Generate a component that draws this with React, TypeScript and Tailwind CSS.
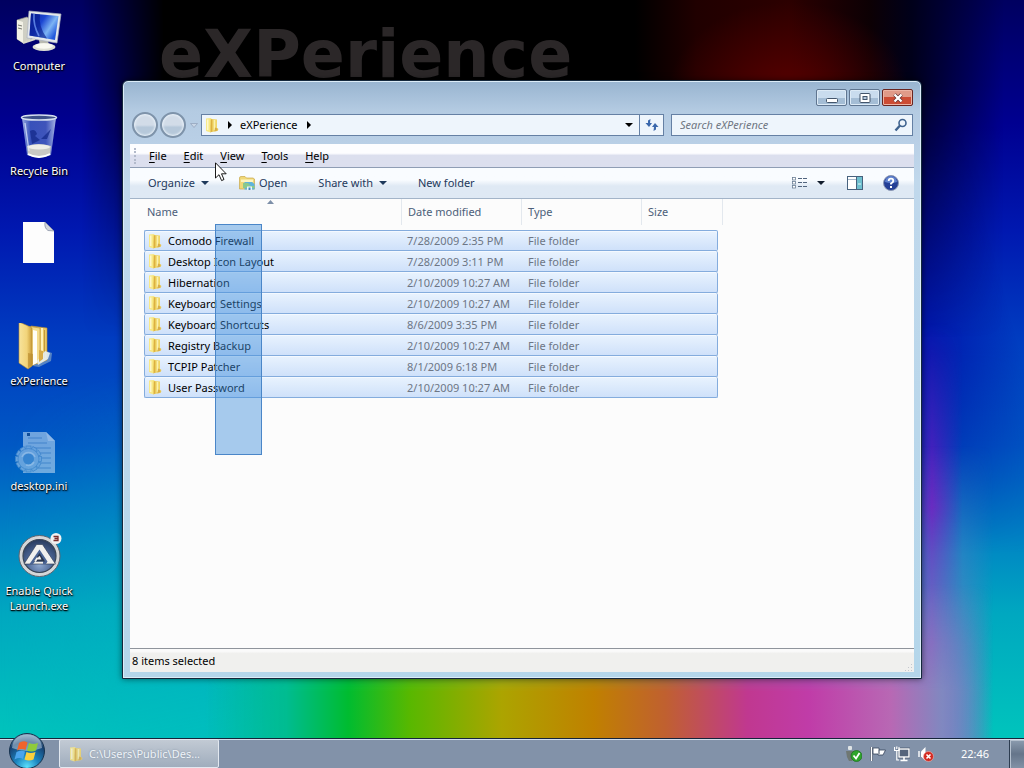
import type { ReactNode } from "react";

function ComputerIcon() {
  return (
    <svg viewBox="0 0 48 48" className="size-12" aria-hidden="true">
      <defs>
        <linearGradient id="screen" x1="0" y1="0" x2="1" y2="0.6">
          <stop offset="0" stopColor="#0a1f9c" />
          <stop offset="0.45" stopColor="#1c46d2" />
          <stop offset="0.75" stopColor="#7db4f4" />
          <stop offset="1" stopColor="#2258dc" />
        </linearGradient>
      </defs>
      <g transform="translate(-2 0)">
        <path d="M4 12 L14 9 L18 12 L18 32 L10 35 L4 31 Z" fill="#cfcfc4" stroke="#8f9088" strokeWidth="0.7" />
        <path d="M4 12 L10 14 L10 35 L4 31 Z" fill="#f2f1e6" />
        <path d="M5 17l4 1M5 20l4 1" stroke="#77786e" strokeWidth="1" />
        <path d="M26 32 L35 32 L36 38 L27 38 Z" fill="#b9bab0" />
        <ellipse cx="31" cy="39" rx="11.500" ry="4" fill="#dedfd4" />
        <ellipse cx="31" cy="38" rx="9" ry="2.800" fill="#f8f8f0" />
        <path d="M16 3 L48 6 L44 35 L14 30 Z" fill="#e4e8ec" stroke="#a9b0bc" strokeWidth="0.7" />
        <path d="M18 5.500 L45.500 8 L42 32 L16.500 27.500 Z" fill="url(#screen)" />
        <path d="M18 5.500 L27 6.400 Q25 18 34 30.500 L16.500 27.500 Z" fill="#061a8c" opacity="0.65" />
        <path d="M21 6 Q20 17 26 28" stroke="#6a94f0" strokeWidth="1.600" fill="none" opacity="0.8" />
        <path d="M10 35 L22 31" stroke="#d8d8cc" strokeWidth="2" />
      </g>
    </svg>
  );
}

function RecycleIcon() {
  return (
    <svg viewBox="0 0 48 48" className="size-12" aria-hidden="true">
      <defs>
        <linearGradient id="bin" x1="0" y1="0" x2="1" y2="0">
          <stop offset="0" stopColor="#b8cdf2" stopOpacity="0.85" />
          <stop offset="0.25" stopColor="#4a6cc8" stopOpacity="0.75" />
          <stop offset="0.7" stopColor="#5a78cc" stopOpacity="0.7" />
          <stop offset="1" stopColor="#c4d4f4" stopOpacity="0.85" />
        </linearGradient>
      </defs>
      <g transform="translate(-5 0)">
        <path d="M12 5 L46 5 L41 42 Q29 48 17 42 Z" fill="url(#bin)" />
        <path d="M17 33 Q28 29 41 33 L40 42 Q29 47 18 42 Z" fill="#c9c9c4" />
        <ellipse cx="29" cy="34" rx="11" ry="2.600" fill="#efeee8" />
        <path d="M18 41 Q29 47 40 41" stroke="#fff" strokeWidth="1.800" fill="none" />
        <path d="M20 18 q5 -3 7 3 l-2 2 5 4 -8 4 z M31 26 l10 -10 -4 10 z M24 29 l7 -2" fill="#142a8a" opacity="0.75" />
        <ellipse cx="29" cy="4.500" rx="17.500" ry="2.600" fill="#3c5088" stroke="#d5dfee" strokeWidth="1.500" />
        <path d="M15 10 L19 38" stroke="#e4edff" strokeWidth="1.300" opacity="0.7" />
      </g>
    </svg>
  );
}

function PageIcon() {
  return (
    <svg viewBox="0 0 48 48" className="size-12" aria-hidden="true">
      <path d="M8 4 H30 L39 13 V45 H8 Z" fill="#fdfdfd" />
      <path d="M30 4 L39 13 L33 12.500 Q29 10 30 4 Z" fill="#d3d6dc" stroke="#6d7890" strokeWidth="0.6" />
    </svg>
  );
}

function FolderBigIcon() {
  return (
    <svg viewBox="0 0 48 48" className="size-12" aria-hidden="true">
      <defs>
        <linearGradient id="fold" x1="0" y1="0" x2="1" y2="0">
          <stop offset="0" stopColor="#f7e39c" />
          <stop offset="0.6" stopColor="#f2d47a" />
          <stop offset="1" stopColor="#c99c38" />
        </linearGradient>
      </defs>
      <g transform="translate(-6 -1)">
        <path d="M34 28 L43 31 L42 39 L30 45 L24 44 Z" fill="#8fb0c8" opacity="0.6" />
        <path d="M22 4 L38 6 L38 38 L28 42 Z" fill="#eac866" stroke="#b98f34" strokeWidth="0.600" />
        <path d="M33 6 V38" stroke="#fff1b8" strokeWidth="2" />
        <path d="M35.500 8 V36" stroke="#c49a3c" strokeWidth="1" />
        <path d="M17 4 L31 6 L31 40 L22 44 Z" fill="#f4dc8c" stroke="#b98f34" strokeWidth="0.600" />
        <path d="M24 8 L28 9 V41 L24 43 Z" fill="#fffef6" />
        <path d="M36 29 L41 31 L39 37 L29 43 L28 39 Z" fill="#e5f0f4" opacity="0.9" />
        <path d="M30 28 L34 29 V37 L30 40 Z" fill="#d8ac48" />
        <path d="M10 0 L17 3 L23 6 L23 44 L19 47 L10 41 Z" fill="url(#fold)" stroke="#b98f34" strokeWidth="0.600" />
        <path d="M19 31 L24 32 V42 L19 46 Z" fill="#bb8d30" opacity="0.7" />
      </g>
    </svg>
  );
}

const gearTeeth = [0, 30, 60, 90, 120, 150, 180, 210, 240, 270, 300, 330];

function IniIcon() {
  return (
    <svg viewBox="0 0 48 48" className="size-12" aria-hidden="true" opacity="0.62">
      <g transform="translate(-5 0)">
        <path d="M13 4 H36 L45 13 V45 H13 Z" fill="#b4d4f0" />
        <path d="M36 4 L45 13 L38 13 Z" fill="#e4f1fc" />
        <path d="M18 10 h14 M18 15 h19 M23 20 h18 M30 25 h11 M31 30 h10 M30 35 h11 M27 40 h14" stroke="#6a9cd0" strokeWidth="1.200" />
        <rect x="17" y="5" width="3" height="3" fill="#1a4a80" />
        <g fill="#a3cbed" stroke="#5f9ad0" strokeWidth="0.700">
          {gearTeeth.map((a) => (
            <rect key={a} x="16" y="18" width="5" height="7" transform={`rotate(${a} 18.500 31)`} />
          ))}
          <circle cx="18.500" cy="31" r="10.500" />
        </g>
        <circle cx="18.500" cy="31" r="5.500" fill="#5a9cd8" />
        <path d="M12 29 a7 7 0 0 1 13 0 M24 34 a7 7 0 0 1 -8 3" fill="none" stroke="#dceefc" strokeWidth="1.500" />
      </g>
    </svg>
  );
}

function AutoItIcon() {
  return (
    <svg viewBox="0 0 48 48" className="size-12" aria-hidden="true">
      <defs>
        <radialGradient id="disc" cx="0.5" cy="0.75" r="0.8">
          <stop offset="0" stopColor="#8fa9d0" />
          <stop offset="0.5" stopColor="#4a6494" />
          <stop offset="1" stopColor="#233454" />
        </radialGradient>
      </defs>
      <circle cx="24.500" cy="23" r="20.500" fill="#d4d6d8" stroke="#5c6470" strokeWidth="1" />
      <circle cx="24.500" cy="23" r="16.500" fill="url(#disc)" stroke="#394556" strokeWidth="1.200" />
      <path d="M21.500 11.500 H27.500 L40.500 31 H9 Z" fill="#f0f0ee" stroke="#28344c" strokeWidth="0.600" />
      <path d="M24.500 16.500 L32.500 28.500 L31 31 L28 31 L28 28.500 H20 L18 31 L14.500 31 Z" fill="#4a6494" />
      <path d="M24.500 20 L30 28.500 H19 Z" fill="#28344c" />
      <path d="M20 28.500 L22 25.500 H25 L24 23.500" stroke="#f0f0ee" strokeWidth="1.800" fill="none" />
      <circle cx="41" cy="5.500" r="5.500" fill="#f2f2f2" />
      <path d="M38.500 3.500 h4.500 v4 h-4.500 M39.500 5.500 h3.500" stroke="#7a2d2d" strokeWidth="1.300" fill="none" />
    </svg>
  );
}

function FolderIcon() {
  return (
    <svg viewBox="0 0 16 16" className="size-4 shrink-0" aria-hidden="true">
      <path d="M8 2 L13 2.500 V11 L14.500 12 L13.500 14 L8 15 Z" fill="#f0d668" />
      <path d="M10.500 3 V13" stroke="#fbf0b0" strokeWidth="1.500" />
      <path d="M2 1.500 L7 1 L8 2.500 V14.500 L6.500 15.500 L2 14 Z" fill="#f8e884" />
      <path d="M6.800 2 L8.300 2.500 V14.500 L6.500 15.500 V9.500 Z" fill="#dcb040" />
      <path d="M3.700 2.500 V13" stroke="#fdf7cc" strokeWidth="1.600" />
      <path d="M11 10.500 L13.500 11.500 V13.500 L10.500 14.500 Z" fill="#d8ae48" />
    </svg>
  );
}

function OpenFolderIcon() {
  return (
    <svg viewBox="0 0 16 16" className="size-4 shrink-0" aria-hidden="true">
      <path d="M0.500 3 Q0.500 1.500 2 1.500 H6 L7.500 3 H14 L15.500 4 V14 H0.500 Z" fill="#f0d878" stroke="#c9a84a" strokeWidth="0.700" />
      <path d="M2 4.500 H14 V7 H2 Z" fill="#fdf4c0" />
      <path d="M5.500 7 H13 L15.500 9 V14.500 H5.500 Z" fill="#5fb4dc" />
      <path d="M4 8 H9 L12 11 H15.500 V13 H4 Z" fill="#8bc98c" />
      <path d="M8 11.500 H13 V15 H8 Z" fill="#e9f6fc" />
      <path d="M9.500 12.500 H11.500 V15 H9.500 Z" fill="#4488bc" />
    </svg>
  );
}

function Caret({ className = "" }: { className?: string }) {
  return (
    <svg viewBox="0 0 8 4" className={`h-1 w-2 shrink-0 ${className}`} aria-hidden="true">
      <path d="M0 0 H8 L4 4 Z" fill="currentColor" />
    </svg>
  );
}

function CrumbArrow() {
  return (
    <svg viewBox="0 0 4 8" className="h-2 w-1 shrink-0" aria-hidden="true">
      <path d="M0 0 L4 4 L0 8 Z" fill="#000" />
    </svg>
  );
}

const shortcuts: { name: string; label: string; icon: ReactNode }[] = [
  { name: "Computer", label: "Computer", icon: <ComputerIcon /> },
  { name: "Recycle Bin", label: "Recycle Bin", icon: <RecycleIcon /> },
  { name: "Untitled file", label: "", icon: <PageIcon /> },
  { name: "eXPerience", label: "eXPerience", icon: <FolderBigIcon /> },
  { name: "desktop.ini", label: "desktop.ini", icon: <IniIcon /> },
  { name: "Enable Quick Launch.exe", label: "Enable Quick Launch.exe", icon: <AutoItIcon /> },
];

const files = [
  { name: "Comodo Firewall", date: "7/28/2009 2:35 PM" },
  { name: "Desktop Icon Layout", date: "7/28/2009 3:11 PM" },
  { name: "Hibernation", date: "2/10/2009 10:27 AM" },
  { name: "Keyboard Settings", date: "2/10/2009 10:27 AM" },
  { name: "Keyboard Shortcuts", date: "8/6/2009 3:35 PM" },
  { name: "Registry Backup", date: "2/10/2009 10:27 AM" },
  { name: "TCPIP Patcher", date: "8/1/2009 6:18 PM" },
  { name: "User Password", date: "2/10/2009 10:27 AM" },
];

const menus = ["File", "Edit", "View", "Tools", "Help"];

function Wallpaper() {
  return (
    <div className="absolute inset-0 overflow-hidden bg-[linear-gradient(to_bottom,#000060_0%,#000090_16%,#0018b0_30%,#003cc0_44%,#0058c4_58%,#0084c4_70%,#00a8c0_80%,#00c4bc_96%)]">
      <div className="absolute inset-0 bg-[linear-gradient(168deg,transparent_40%,#00b8c0_82%)] opacity-50 [mask-image:linear-gradient(to_right,transparent_0%,black_12%,black_30%,transparent_50%)]" />
      <div className="absolute inset-0 bg-[linear-gradient(75deg,transparent_72%,#0000a0_80%,transparent_92%)] [mask-image:linear-gradient(to_bottom,transparent_14%,black_28%,black_46%,transparent_72%)]" />
      <div className="absolute inset-0 bg-[linear-gradient(to_right,transparent_89%,#6018c0_91%,transparent_94%)] [mask-image:linear-gradient(to_bottom,transparent_42%,black_66%,transparent_82%)]" />
      <div className="absolute inset-0 bg-[linear-gradient(to_right,transparent_86%,#8058c4_91%,#5878c4bb_94%,transparent_97%)] [mask-image:linear-gradient(to_bottom,transparent_58%,black_84%)]" />
      <div className="absolute inset-0 bg-[linear-gradient(to_right,transparent_20%,#00bc90_28%,#00bc30_34%,#58b800_40%,#aca400_49%,#c08000_58%,#c06030_65%,#c03890_73%,#c03ca8_79%,#b868b4_87%,#8088c0_92%,transparent_97%)] [mask-image:linear-gradient(to_bottom,transparent_76%,black_90%)]" />
      <div className="absolute inset-0 bg-[linear-gradient(to_right,transparent_8%,#000_16%,#000_62%,#200000_68%,#2c0000_77%,#0c0004_85%,#00001a_89%,transparent_98%)] [mask-image:linear-gradient(to_bottom,black_11%,transparent_44%)]" />
      <div className="absolute inset-0 bg-[radial-gradient(ellipse_120px_90px_at_77%_92px,#580000_0%,transparent_100%)]" />
      <p className="absolute top-4 left-[159px] font-['DejaVu_Sans',sans-serif] text-[65px] leading-[78px] font-bold text-[#2b2728]">
        eXPerience
      </p>
    </div>
  );
}

function CaptionButtons() {
  return (
    <div className="flex h-[17px] justify-end gap-[2px] pr-2">
      <button aria-label="Minimize" className="flex w-[31px] items-center justify-center rounded-[2px] border border-[#5f7590] bg-linear-to-b from-[#c9dcee] from-50% to-[#a4bdd5] to-50% shadow-[inset_0_0_0_1px_#dceaf6]">
        <svg viewBox="0 0 12 10" className="h-[10px] w-3" aria-hidden="true">
          <rect x="0.500" y="5.500" width="11" height="4" rx="1" fill="#fff" stroke="#43556b" />
        </svg>
      </button>
      <button aria-label="Maximize" className="flex w-[31px] items-center justify-center rounded-[2px] border border-[#5f7590] bg-linear-to-b from-[#c9dcee] from-50% to-[#a4bdd5] to-50% shadow-[inset_0_0_0_1px_#dceaf6]">
        <svg viewBox="0 0 12 10" className="h-[10px] w-3" aria-hidden="true">
          <rect x="1" y="0.500" width="10" height="9" rx="1" fill="#fff" stroke="#43556b" />
          <rect x="4" y="3.500" width="4" height="3" fill="#b5cadf" stroke="#43556b" />
        </svg>
      </button>
      <button aria-label="Close" className="flex w-[31px] items-center justify-center rounded-[2px] border border-[#6a2520] bg-linear-to-b from-[#e09a88] from-45% to-[#cc4c34] to-50% shadow-[inset_0_0_0_1px_#ecb4a4]">
        <svg viewBox="0 0 12 10" className="h-[10px] w-3" aria-hidden="true">
          <path d="M2.500 1.500 L9.500 8.500 M9.500 1.500 L2.500 8.500" stroke="#5c3030" strokeWidth="3.800" />
          <path d="M2.500 1.500 L9.500 8.500 M9.500 1.500 L2.500 8.500" stroke="#fff" strokeWidth="2.400" />
        </svg>
      </button>
    </div>
  );
}

function NavRow() {
  return (
    <div className="mt-2 flex h-[22px] items-center pr-2 pl-[9px]">
      <div className="flex">
        <button aria-label="Back" className="size-[26px] rounded-full border-2 border-[#7e93aa] bg-linear-to-b from-[#d2dce8] from-50% to-[#b6c8da] to-60% shadow-[inset_0_0_2px_1px_#e8f0f8]" />
        <button aria-label="Forward" className="ml-[2px] size-[26px] rounded-full border-2 border-[#7e93aa] bg-linear-to-b from-[#d2dce8] from-50% to-[#b6c8da] to-60% shadow-[inset_0_0_2px_1px_#e8f0f8]" />
      </div>
      <button aria-label="Recent pages" className="flex w-[15px] justify-center">
        <svg viewBox="0 0 8 5" className="h-[5px] w-2" aria-hidden="true">
          <path d="M0.500 0.500 H7.500 L4 4.500 Z" fill="#c9d6e6" stroke="#94a5bd" strokeWidth="0.800" />
        </svg>
      </button>
      <div className="flex h-[22px] flex-1 items-center border border-[#6580a4] bg-[#eef5fc] pl-[2px]">
        <FolderIcon />
        <span className="ml-2">
          <CrumbArrow />
        </span>
        <button className="ml-2 text-black">eXPerience</button>
        <span className="ml-[10px] flex-1">
          <CrumbArrow />
        </span>
        <button aria-label="Previous locations" className="flex h-full items-center px-[6px] text-black">
          <Caret />
        </button>
        <button aria-label="Refresh" className="flex h-full w-6 items-center justify-center border-l border-[#6580a4]">
          <svg viewBox="0 0 14 14" className="size-[14px]" aria-hidden="true" fill="#3b68ac">
            <path d="M5.500 1 L3 2.500 V5 H0.500 L4 9 L7 5 H5 Z" />
            <path d="M8.500 13 L11 11.500 V9 H13.500 L10 5 L7 9 H9 Z" />
          </svg>
        </button>
      </div>
      <div className="ml-[7px] flex h-[22px] w-[242px] items-center border border-[#6580a4] bg-[#eef5fc] pr-1 pl-2">
        <input
          type="search"
          aria-label="Search eXPerience"
          placeholder="Search eXPerience"
          className="min-w-0 flex-1 bg-transparent italic outline-none placeholder:text-[#6e7682]"
        />
        <svg viewBox="0 0 14 14" className="size-[14px]" aria-hidden="true" fill="none" stroke="#3f638f">
          <circle cx="8.500" cy="5" r="3.500" strokeWidth="1.600" />
          <path d="M6 7.500 L1.500 12.500" strokeWidth="2.400" />
        </svg>
      </div>
    </div>
  );
}

function Toolbar() {
  return (
    <div className="flex h-[31px] items-center border-b border-[#a3b4c8] bg-linear-to-b from-[#f9fcff] from-40% to-[#dfe9f4] to-60% pr-[15px] pl-[18px] text-[#1e395b]">
      <button className="flex items-center gap-[6px]">
        Organize <Caret />
      </button>
      <button className="ml-[30px] flex items-center gap-1">
        <OpenFolderIcon /> Open
      </button>
      <button className="ml-[31px] flex items-center gap-[6px]">
        Share with <Caret />
      </button>
      <button className="ml-[31px] flex-none">New folder</button>
      <div className="ml-auto flex items-center">
        <button aria-label="Change view" className="flex items-center gap-[9px]">
          <svg viewBox="0 0 16 14" className="h-[14px] w-4" aria-hidden="true">
            <g fill="#fff" stroke="#6c7f96" strokeWidth="0.800">
              <rect x="0.500" y="1.500" width="3" height="2.500" />
              <rect x="0.500" y="5.500" width="3" height="2.500" />
              <rect x="0.500" y="9.500" width="3" height="2.500" />
            </g>
            <path d="M6 2.500 h4 M11 2.500 h4 M6 6.500 h4 M11 6.500 h4 M6 10.500 h4 M11 10.500 h4" stroke="#51647e" />
          </svg>
          <Caret className="text-[#111c2c]" />
        </button>
        <button aria-label="Show preview pane" className="ml-[22px]">
          <svg viewBox="0 0 16 14" className="h-[14px] w-4" aria-hidden="true">
            <rect x="0.500" y="0.500" width="15" height="13" fill="#fff" stroke="#47627e" />
            <path d="M1 3.500 H10" stroke="#a6b8ca" />
            <rect x="10" y="1" width="5" height="12" fill="#6fc0cf" />
            <path d="M9.500 1 V13" stroke="#47627e" />
            <path d="M11 8 H14" stroke="#e3f8fb" />
          </svg>
        </button>
        <button aria-label="Help" className="ml-5">
          <svg viewBox="0 0 16 16" className="size-4" aria-hidden="true">
            <circle cx="8" cy="8" r="7.500" fill="#243f96" stroke="#8c98b4" />
            <path d="M2 7 A6 6 0 0 1 14 7 Q8 9 2 7 Z" fill="#6f94dc" opacity="0.8" />
            <path d="M5.700 6 Q5.700 3.700 8 3.700 T10.300 6 Q10.300 7.300 8 8.500 V9.500" fill="none" stroke="#fff" strokeWidth="1.800" />
            <rect x="7" y="11" width="2" height="2" fill="#fff" />
          </svg>
        </button>
      </div>
    </div>
  );
}

function FileTable() {
  return (
    <table className="ml-[14px] w-[579px] table-fixed border-separate border-spacing-0 text-left">
      <colgroup>
        <col className="w-[257px]" />
        <col className="w-[120px]" />
        <col className="w-[120px]" />
        <col className="w-[77px]" />
        <col className="w-[5px]" />
      </colgroup>
      <thead>
        <tr className="h-[26px] text-[#4c607a]">
          <th className="pl-[3px] font-normal">Name</th>
          <th className="border-l border-[#e3e8ee] pl-[6px] font-normal">Date modified</th>
          <th className="border-l border-[#e3e8ee] pl-[6px] font-normal">Type</th>
          <th className="border-l border-[#e3e8ee] pl-[6px] font-normal">Size</th>
          <td className="border-r border-[#e3e8ee]" />
        </tr>
      </thead>
      <tbody>
        <tr className="h-[5px]">
          <td colSpan={5} />
        </tr>
        {files.map((f, i) => {
          const line = i === 0 ? "border-y" : "border-b";
          return (
            <tr key={f.name} className="h-[21px] text-[#6d7685]">
              <td className={`${line} rounded-l-[2px] border-l border-[#84acdd] bg-linear-to-b from-[#e9f3fe] to-[#cfe1fa] p-0 shadow-[inset_0_1px_0_#f4f9ff]`}>
                <span className="flex items-center gap-[5px] pl-[2px] leading-[19px] text-black">
                  <FolderIcon />
                  {f.name}
                </span>
              </td>
              <td className={`${line} border-[#84acdd] bg-linear-to-b from-[#e9f3fe] to-[#cfe1fa] p-0 pl-[6px] leading-[19px] whitespace-nowrap shadow-[inset_0_1px_0_#f4f9ff]`}>{f.date}</td>
              <td className={`${line} border-[#84acdd] bg-linear-to-b from-[#e9f3fe] to-[#cfe1fa] p-0 pl-[7px] leading-[19px] shadow-[inset_0_1px_0_#f4f9ff]`}>File folder</td>
              <td className={`${line} rounded-r-[2px] border-r border-[#84acdd] bg-linear-to-b from-[#e9f3fe] to-[#cfe1fa] p-0 shadow-[inset_0_1px_0_#f4f9ff]`} />
              <td className="p-0" />
            </tr>
          );
        })}
      </tbody>
    </table>
  );
}

function ExplorerWindow() {
  return (
    <section className="absolute top-20 right-[102px] bottom-[89px] left-[122px] flex flex-col rounded-t-md border border-[#14283c] bg-[linear-gradient(to_bottom,#98b4d0_0px,#b4cbe2_30px,#b9cfe6_60px,#c0d8ec_100px,#b4d6ea_100%)] px-[7px] pb-[6px] shadow-[inset_0_0_0_1px_#dcecf8,0_0_6px_#0008]">
      <div className="-mx-[7px] flex flex-col pt-2">
        <CaptionButtons />
        <NavRow />
      </div>
      <nav className="mt-2 flex h-6 items-center gap-px border-b border-[#8f9db4] bg-linear-to-b from-[#fdfdff] from-40% to-[#dcdfee] to-50% pl-1 text-black">
        <span className="mr-1 h-4 border-l-2 border-dotted border-[#b3bacb]" />
        {menus.map((m) => (
          <button key={m} className="px-2">
            <span className="underline underline-offset-2">{m[0]}</span>
            {m.slice(1)}
          </button>
        ))}
      </nav>
      <Toolbar />
      <div className="relative flex-1 bg-[#fcfcfc]">
        <FileTable />
        <svg viewBox="0 0 7 4" className="absolute top-px left-[137px] h-1 w-[7px]" aria-hidden="true">
          <path d="M0 4 L3.500 0 L7 4 Z" fill="#7d8fa8" />
        </svg>
        <div className="absolute top-[25px] left-[85px] h-[231px] w-[47px] border border-[#4a86c8] bg-[#3f8fdc]/45" />
      </div>
      <footer className="flex h-6 items-center justify-between border-t border-[#8f949c] bg-linear-to-b from-[#fafafa] from-10% to-[#f0f0ee] to-20% pl-[2px] text-black">
        <span>8 items selected</span>
        <svg viewBox="0 0 8 8" className="mr-px size-2 self-end" aria-hidden="true" fill="#c4c8ce">
          <path d="M6 0h1v1H6zM6 3h1v1H6zM3 3h1v1H3zM6 6h1v1H6zM3 6h1v1H3zM0 6h1v1H0z" />
        </svg>
      </footer>
    </section>
  );
}

function StartOrb() {
  return (
    <svg viewBox="0 0 38 38" className="size-[38px]" aria-hidden="true">
      <defs>
        <radialGradient id="orb" cx="0.5" cy="0.95" r="0.95">
          <stop offset="0" stopColor="#5ce0fc" />
          <stop offset="0.35" stopColor="#1c86c0" />
          <stop offset="0.75" stopColor="#173f70" />
          <stop offset="1" stopColor="#7fa0bc" />
        </radialGradient>
      </defs>
      <circle cx="19" cy="18" r="17.500" fill="url(#orb)" stroke="#16324e" />
      <path d="M4 15 Q5 2 19 1.500 Q33 2 34 15 Q19 21 4 15 Z" fill="#dceaf4" opacity="0.45" />
      <path d="M11 10 Q15 7 19.500 9.500 L17.500 17 Q13.500 15 9 17.500 Z" fill="#f0642c" />
      <path d="M21 10 Q25 12 30 10 L28 17.500 Q23.500 19.500 19 17.500 Z" fill="#8fcb3c" />
      <path d="M8.500 19 Q13 17 17 18.500 L15 26 Q11.500 24 6.500 26.500 Z" fill="#4aa4ec" />
      <path d="M18.500 19 Q22.500 21 27.500 19 L25.500 26.500 Q21 28.500 16.500 26.500 Z" fill="#fcd03c" />
    </svg>
  );
}

function Taskbar() {
  return (
    <footer className="relative flex h-[30px] items-stretch border-t border-[#16243a] bg-[#8292a9] shadow-[inset_0_1px_0_#d4deea]">
      <button aria-label="Start" className="-mt-[6px] ml-2 h-[35px] w-[38px] overflow-hidden">
        <StartOrb />
      </button>
      <button className="ml-[13px] flex w-[160px] items-center gap-[5px] rounded-[2px] border border-[#e2e8f0] bg-linear-to-b from-[#c2cad4] to-[#a0adbd] pl-2 text-[#eef3f8] [text-shadow:0_0_2px_#7c8a9c]">
        <span className="opacity-80">
          <FolderIcon />
        </span>
        C:\Users\Public\Des...
      </button>
      <div className="ml-auto flex items-center gap-2">
        <svg viewBox="0 0 16 16" className="size-4" aria-hidden="true">
          <rect x="2" y="0" width="4" height="4" rx="1" fill="#dfe4e6" />
          <path d="M0 5 H9 V10 L6 15 H3 L1 11 Z" fill="#6f7773" />
          <circle cx="10.500" cy="10" r="5.500" fill="#2fa52c" stroke="#1b6d1c" strokeWidth="0.700" />
          <path d="M7.500 9.500 L10 12.500 L13.500 7" fill="none" stroke="#fff" strokeWidth="1.800" />
        </svg>
        <svg viewBox="0 0 16 16" className="size-4" aria-hidden="true">
          <path d="M1.500 1 V15" stroke="#36445a" strokeWidth="3" />
          <path d="M1.500 1 V15" stroke="#fff" strokeWidth="1.600" />
          <path d="M3 2 H9 V4 H15.500 L13 9 H8 V8 H3 Z" fill="#fff" stroke="#36445a" strokeWidth="0.800" />
          <path d="M9 4 V8" stroke="#36445a" />
        </svg>
        <svg viewBox="0 0 16 16" className="size-4" aria-hidden="true">
          <rect x="5" y="3" width="10" height="8" fill="#56657c" stroke="#36445a" strokeWidth="2.600" />
          <rect x="5" y="3" width="10" height="8" fill="#56657c" stroke="#fff" strokeWidth="1.400" />
          <path d="M10 11 V14 M6.500 14.500 H13.500" stroke="#fff" strokeWidth="1.600" />
          <path d="M0.500 1 V4.500 H5 V1 M2.800 0.500 V3 M2.800 4.500 V14 H5" fill="none" stroke="#fff" strokeWidth="1.200" />
        </svg>
        <svg viewBox="0 0 16 16" className="size-4" aria-hidden="true">
          <path d="M1 5 V11" stroke="#fff" strokeWidth="1.400" />
          <path d="M3 5.500 L7.500 1 V15 L3 10.500 Z" fill="#fff" />
          <circle cx="10.500" cy="10.500" r="5" fill="#d32b22" stroke="#f0b4ae" strokeWidth="0.600" />
          <path d="M8.500 8.500 L12.500 12.500 M12.500 8.500 L8.500 12.500" stroke="#fff" strokeWidth="1.600" />
        </svg>
        <time className="mr-5 ml-[19px] text-white">22:46</time>
      </div>
      <button aria-label="Show desktop" className="mt-px w-[15px] border-l border-[#2c3c50] bg-linear-to-b from-[#8c9caf] via-[#65758a] to-[#8292a6] shadow-[inset_1px_1px_0_#b4c0ce]" />
    </footer>
  );
}

export default function App() {
  return (
    <div className="relative flex h-screen min-h-[680px] flex-col overflow-hidden font-['Noto_Sans','Open_Sans',sans-serif] text-[11px] leading-4">
      <Wallpaper />
      <main className="relative flex-1 pt-2">
        <div className="flex w-[78px] flex-col">
          {shortcuts.map((s) => (
            <button key={s.name} aria-label={s.name} className="flex h-[105px] flex-col items-center">
              {s.icon}
              <span className="mt-[2px] leading-[15px] text-white [text-shadow:1px_1px_2px_#000,0_1px_1px_#000]">{s.label}</span>
            </button>
          ))}
        </div>
      </main>
      <ExplorerWindow />
      <svg viewBox="0 0 12 20" className="absolute top-[162px] left-[215px] h-5 w-3" aria-hidden="true">
        <path d="M0.500 0.800 V16 L4 12.700 L6.600 18.600 L9 17.500 L6.500 11.800 H11.200 Z" fill="#fff" stroke="#000" strokeWidth="0.900" />
      </svg>
      <Taskbar />
    </div>
  );
}
